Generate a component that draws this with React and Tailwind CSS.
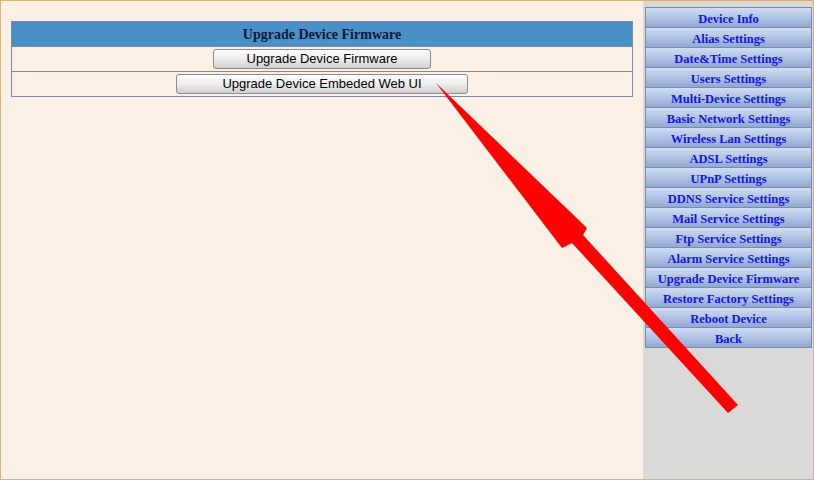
import React from 'react'

const menuItems = [
    'Device Info',
    'Alias Settings',
    'Date&Time Settings',
    'Users Settings',
    'Multi-Device Settings',
    'Basic Network Settings',
    'Wireless Lan Settings',
    'ADSL Settings',
    'UPnP Settings',
    'DDNS Service Settings',
    'Mail Service Settings',
    'Ftp Service Settings',
    'Alarm Service Settings',
    'Upgrade Device Firmware',
    'Restore Factory Settings',
    'Reboot Device',
    'Back',
]

function LegacyButton({ children, className }) {
    return (
        <button
            className={`h-[20px] rounded-[3px] border border-[#8c8c8c] bg-gradient-to-b from-[#fdfdfd] via-[#eeeeee] to-[#cfcfcf] text-[13px] leading-[18px] text-black font-['Liberation_Sans',Arial,sans-serif] ${className}`}
        >
            {children}
        </button>
    )
}

function App() {
    return (
        <div className="relative w-[814px] h-[480px] overflow-hidden border border-[#d8b47c] bg-[#faf0e6] flex">
            {/* main content */}
            <div className="w-[642px] h-full pt-[20px] pl-[10px]">
                <div className="w-[622px] border border-[#8088a8]">
                    <div className="h-[25px] bg-[#4a8fc6] border-b border-[#8088a8] flex items-center justify-center text-[14px] font-bold text-[#0c1a3a] font-['Liberation_Serif','Times_New_Roman',serif]">
                        Upgrade Device Firmware
                    </div>
                    <div className="h-[25px] border-b border-[#8088a8] flex items-center justify-center">
                        <LegacyButton className="w-[218px]">Upgrade Device Firmware</LegacyButton>
                    </div>
                    <div className="h-[24px] flex items-center justify-center">
                        <LegacyButton className="w-[292px]">Upgrade Device Embeded Web UI</LegacyButton>
                    </div>
                </div>
            </div>

            {/* side menu */}
            <div className="flex-1 h-full bg-[#d9d9d9] pt-[6px] pl-[2px] pr-[1px]">
                <div className="border-t border-[#7d8bab]">
                    {menuItems.map((item) => (
                        <div
                            key={item}
                            className="h-[20px] pt-[2px] border-x border-b border-[#7d8bab] bg-gradient-to-b from-[#d0ddf5] to-[#93a9d2] flex items-center justify-center text-[12.5px] leading-[16px] font-bold text-[#1414e6] font-['Liberation_Serif','Times_New_Roman',serif]"
                        >
                            {item}
                        </div>
                    ))}
                </div>
            </div>

            {/* annotation arrow */}
            <svg className="absolute left-[-1px] top-[-1px] pointer-events-none" width="814" height="480">
                <polygon
                    points="436,83 587,228 583,235 738,405 728,413 572,243 562,248"
                    fill="#ff0000"
                />
            </svg>
        </div>
    )
}

export default App
